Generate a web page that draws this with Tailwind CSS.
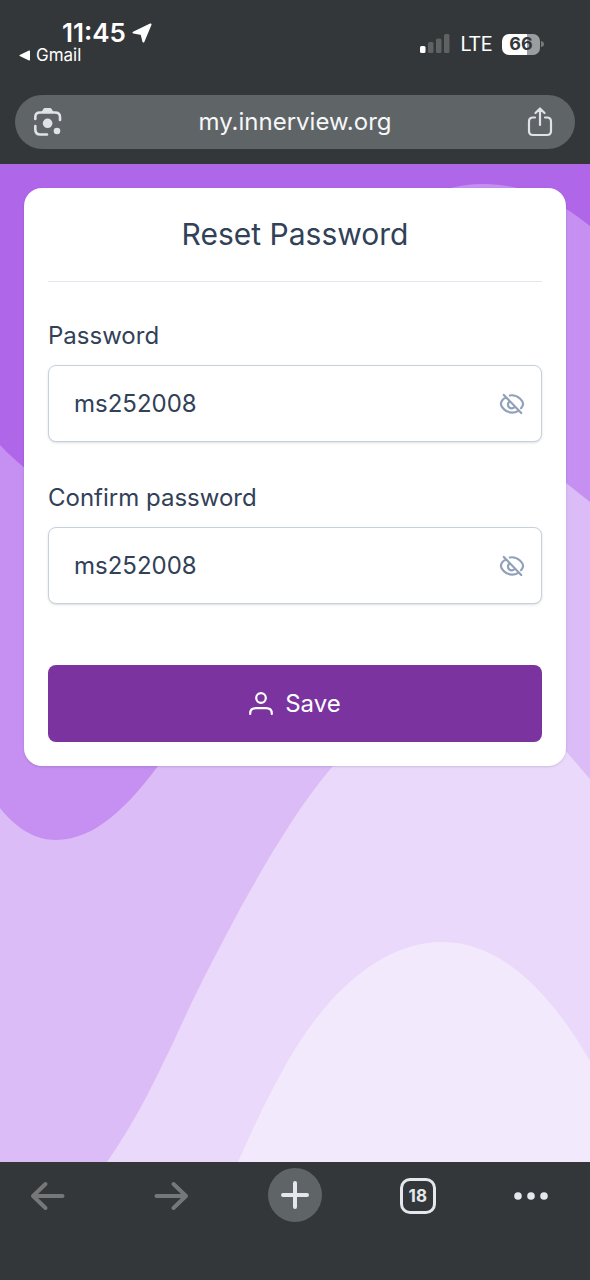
<!DOCTYPE html>
<html lang="en">
<head>
<meta charset="utf-8">
<meta name="viewport" content="width=device-width, initial-scale=1">
<title>Reset Password</title>
<script src="https://cdn.jsdelivr.net/npm/@tailwindcss/browser@4"></script>
</head>
<body class="flex min-h-screen flex-col bg-[#33373a] font-['Inter',sans-serif] text-slate-700">
  <header class="px-[15px] pb-[15px] pt-5">
    <!-- Status bar -->
    <div class="flex h-[75px] items-start justify-between pl-1 pr-[31px] text-white">
      <div>
        <div class="flex items-center gap-[6px] pl-[43px] text-[26px] leading-[26px] font-semibold">
          <span>11:45</span>
          <svg class="h-5 w-5" viewBox="0 0 20 20" fill="#fff" stroke="#fff" stroke-width="2" stroke-linejoin="round" aria-hidden="true"><path d="M18.500 1.500 1.500 9.600 9.600 11 11.400 18.500Z"/></svg>
        </div>
        <a href="#" class="flex items-center gap-[6px] text-[17px] leading-[19px]">
          <svg class="h-[11px] w-[11px]" viewBox="0 0 11 11" fill="#fff" aria-hidden="true"><path d="M10 .5Q11 .2 11 1.2V9.800Q11 10.800 10 10.500L.7 6.100Q0 5.500.7 4.900Z"/></svg>
          <span>Gmail</span>
        </a>
      </div>
      <div class="flex items-center pt-3">
        <svg class="h-5 w-[30px]" viewBox="0 0 30 20" fill="#5f6163" aria-hidden="true">
          <rect x="0" y="12" width="5.500" height="7" rx="1.500" fill="#fff"/><rect x="8" y="8" width="5.500" height="11" rx="1.500"/><rect x="16" y="4.500" width="5.500" height="14.500" rx="1.500"/><rect x="24" y="0" width="5.500" height="19" rx="1.500"/>
        </svg>
        <span class="ml-[11px] font-['Roboto',sans-serif] text-xl leading-6">LTE</span>
        <span class="ml-[10px] flex h-[21px] w-[38px] items-center justify-center rounded-[7px] bg-linear-to-r from-white from-66% to-[#9c9d9f] to-66% text-lg leading-5 font-bold text-[#33373a]">66</span>
        <svg class="ml-px h-[6px] w-[3px]" viewBox="0 0 3 6" fill="#77797b" aria-hidden="true"><path d="M0 0Q3 .5 3 3T0 6Z"/></svg>
      </div>
    </div>
    <!-- Address bar -->
    <div class="flex h-[54px] items-center justify-between rounded-full bg-[#5f6467] px-[18px] text-[#dfe3e7]">
      <button type="button" aria-label="Search with camera">
        <svg class="h-[30px] w-[30px]" viewBox="0 0 30 30" fill="none" stroke="currentColor" stroke-width="2.600" stroke-linecap="round" aria-hidden="true">
          <path d="M2.300 12V10Q2.300 5.500 7 5.500H22Q27 5.500 27 10V13M2.300 19V22.500Q2.300 27.500 7.300 27.500H14"/>
          <path d="M8.500 5 10.500 1.800Q11 1 12 1H17Q18 1 18.500 1.800L20.500 5Z" fill="currentColor" stroke="none"/>
          <circle cx="14.600" cy="16.300" r="4.800" fill="currentColor" stroke="none"/><circle cx="24" cy="24" r="3.300" fill="currentColor" stroke="none"/>
        </svg>
      </button>
      <a href="#" class="text-2xl leading-8 text-[#f6f7f8]">my.innerview.org</a>
      <button type="button" aria-label="Share">
        <svg class="h-[30px] w-[30px]" viewBox="0 0 30 30" fill="none" stroke="currentColor" stroke-width="2.200" stroke-linecap="round" stroke-linejoin="round" aria-hidden="true"><path d="M8 10.500H6Q2 10.500 2 14.500V24Q2 28 6 28H20Q24 28 24 24V14.500Q24 10.500 20 10.500H18M13 18V2M8.500 6 13 1.500 17.500 6"/></svg>
      </button>
    </div>
  </header>

  <main class="relative flex-1 bg-[#b066e8] p-6">
    <!-- Layered wave background -->
    <svg class="absolute inset-0 h-full w-full" viewBox="0 164 590 998" preserveAspectRatio="none" aria-hidden="true">
      <path fill="#c590f1" d="M0 445C70 520 150 520 220 430C300 320 370 184 484 184C525 184 560 202 590 226V1162H0Z"/>
      <path fill="#dbbcf6" d="M0 808C15 827 34 840 56 840C95 840 128 806 158 766C240 655 340 420 470 420C510 420 545 463 566 483L590 502V1162H0Z"/>
      <path fill="#ead9fb" d="M107 1162C140 1115 160 1069 173 1043C200 983 221 945 241 907C270 855 300 804 333 766C370 718 410 680 455 680C510 680 550 733 590 779V1162Z"/>
      <path fill="#f3e9fc" d="M238 1162C253 1128 267 1098 284 1068C325 993 382 942 442 942C504 942 553 997 590 1061V1162Z"/>
    </svg>

    <form class="relative rounded-[18px] bg-white px-6 pb-6 pt-7 shadow-sm">
      <h1 class="border-b border-slate-200 pb-[29px] text-center text-[30px] leading-9">Reset Password</h1>
      <div class="mt-9">
        <label for="password" class="block text-2xl leading-9">Password</label>
        <div class="relative mt-[11px]">
          <input id="password" type="text" value="ms252008" class="h-[77px] w-full rounded-lg border border-[#c6d0df] bg-white pl-[25px] pr-16 text-2xl shadow-sm">
          <button type="button" aria-label="Hide password" class="absolute inset-y-0 right-4 flex items-center text-slate-400">
            <svg class="h-7 w-7" viewBox="0 0 24 24" fill="none" stroke="currentColor" stroke-width="1.900" stroke-linecap="round" aria-hidden="true"><path d="M10.200 4.700Q11 4.500 12 4.500C17.500 4.500 21.500 9.500 21.500 12Q21.500 13.600 19.800 15.600M6.600 6.300C3.800 8 2.500 10.700 2.500 12C2.500 14.500 6.500 19.400 12 19.400Q14.900 19.400 17.400 17.900M9.600 10.200A3.200 3.200 0 1 0 14.300 14.500M5 4.200 19.900 19.700"/></svg>
          </button>
        </div>
      </div>
      <div class="mt-[38px]">
        <label for="confirm" class="block text-2xl leading-9">Confirm password</label>
        <div class="relative mt-[11px]">
          <input id="confirm" type="text" value="ms252008" class="h-[77px] w-full rounded-lg border border-[#c6d0df] bg-white pl-[25px] pr-16 text-2xl shadow-sm">
          <button type="button" aria-label="Hide confirmed password" class="absolute inset-y-0 right-4 flex items-center text-slate-400">
            <svg class="h-7 w-7" viewBox="0 0 24 24" fill="none" stroke="currentColor" stroke-width="1.900" stroke-linecap="round" aria-hidden="true"><path d="M10.200 4.700Q11 4.500 12 4.500C17.500 4.500 21.500 9.500 21.500 12Q21.500 13.600 19.800 15.600M6.600 6.300C3.800 8 2.500 10.700 2.500 12C2.500 14.500 6.500 19.400 12 19.400Q14.900 19.400 17.400 17.900M9.600 10.200A3.200 3.200 0 1 0 14.300 14.500M5 4.200 19.900 19.700"/></svg>
          </button>
        </div>
      </div>
      <button type="submit" class="mt-[61px] flex h-[77px] w-full items-center justify-center gap-3 rounded-lg bg-[#7a339f] text-2xl text-white">
        <svg class="h-6 w-6" viewBox="0 0 24 24" fill="none" stroke="currentColor" stroke-width="2.200" stroke-linecap="round" aria-hidden="true"><circle cx="12" cy="6" r="4.800"/><path d="M1.200 22V21.500Q1.200 16.200 7 16.200H17Q22.800 16.200 22.800 21.500V22"/></svg>
        Save
      </button>
    </form>
  </main>

  <!-- Browser toolbar -->
  <nav class="flex h-[118px] items-start justify-between pl-[21px] pr-[42px] pt-[6px] text-[#e4e8ec]" aria-label="Browser">
    <button type="button" aria-label="Back" class="flex h-14 w-[54px] items-center justify-center text-[#757779]">
      <svg class="h-9 w-9" viewBox="0 0 36 36" fill="none" stroke="currentColor" stroke-width="4" stroke-linecap="round" stroke-linejoin="round" aria-hidden="true"><path d="M32.500 18H3M15.500 6 3 18 15.500 30"/></svg>
    </button>
    <button type="button" aria-label="Forward" class="flex h-14 w-[54px] items-center justify-center text-[#757779]">
      <svg class="h-9 w-9" viewBox="0 0 36 36" fill="none" stroke="currentColor" stroke-width="4" stroke-linecap="round" stroke-linejoin="round" aria-hidden="true"><path d="M3.500 18H33M20.500 6 33 18 20.500 30"/></svg>
    </button>
    <button type="button" aria-label="New tab" class="flex h-[54px] w-[54px] items-center justify-center rounded-full bg-[#5f6467]">
      <svg class="h-7 w-7" viewBox="0 0 28 28" stroke="currentColor" stroke-width="4" stroke-linecap="round" aria-hidden="true"><path d="M2 14H26M14 2V26"/></svg>
    </button>
    <button type="button" aria-label="18 open tabs" class="flex h-14 w-[54px] items-center justify-center">
      <span class="flex h-9 w-9 items-center justify-center rounded-[10px] border-3 border-current text-[17px] leading-none font-bold">18</span>
    </button>
    <button type="button" aria-label="More" class="flex h-14 w-[34px] items-center justify-center">
      <svg class="h-2 w-[34px]" viewBox="0 0 34 8" fill="currentColor" aria-hidden="true"><circle cx="4" cy="4" r="3.800"/><circle cx="17" cy="4" r="3.800"/><circle cx="30" cy="4" r="3.800"/></svg>
    </button>
  </nav>
</body>
</html>
